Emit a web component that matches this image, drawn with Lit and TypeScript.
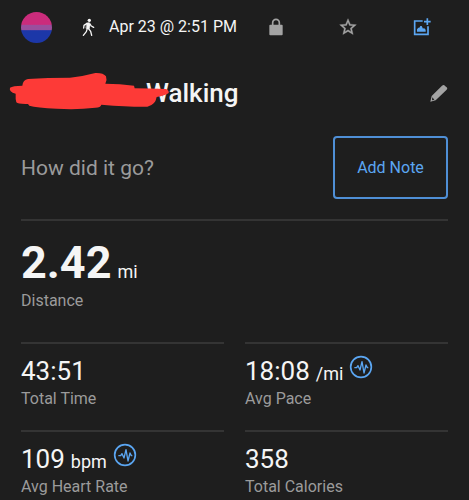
import { LitElement, html, css, svg, nothing } from "lit";
import { customElement, property } from "lit/decorators.js";

@customElement("metric-tile")
class MetricTile extends LitElement {
  @property() value = "";
  @property() unit = "";
  @property() label = "";
  @property({ type: Boolean }) chart = false;
  @property({ type: Boolean, reflect: true }) hero = false;

  static styles = css`
    :host {
      display: block;
      border-top: 2px solid #343434;
      height: 86px;
    }
    .reading {
      display: flex;
      align-items: baseline;
      gap: 6px;
      height: 32px;
      padding-top: 11px;
      line-height: 32px;
      color: #f5f5f5;
    }
    .value {
      font-size: 26px;
    }
    .unit {
      font-size: 18px;
      line-height: 20px;
    }
    .label {
      font-size: 16px;
      line-height: 20px;
      padding-top: 2px;
      color: #9b9b9b;
    }
    .chart {
      align-self: flex-start;
      width: 24px;
      height: 24px;
      padding: 0;
      border: 0;
      background: none;
      color: #5ba6f2;
      cursor: pointer;
    }
    .chart svg {
      display: block;
    }
    :host([hero]) {
      height: 121px;
    }
    :host([hero]) .reading {
      height: 52px;
      padding-top: 16px;
      line-height: 52px;
    }
    :host([hero]) .value {
      font-size: 45px;
      font-weight: 700;
    }
  `;

  render() {
    return html`
      <div class="reading">
        <span class="value">${this.value}</span>
        ${this.unit ? html`<span class="unit">${this.unit}</span>` : nothing}
        ${this.chart
          ? html`<button class="chart" aria-label="Show ${this.label} chart">
              <svg width="24" height="24" viewBox="0 0 72 72" fill="none" stroke="currentColor">
                <circle cx="36" cy="36" r="31" stroke-width="5" />
                <path d="M16 38h7l4-6 6 13 6-25 6 34 6-24 4 8h3" stroke-width="4" stroke-linejoin="round" />
              </svg>
            </button>`
          : nothing}
      </div>
      <div class="label">${this.label}</div>
    `;
  }
}

const walkIcon = svg`
  <svg width="15" height="19" viewBox="0 0 45 57" fill="none" stroke="currentColor" stroke-linecap="round" stroke-linejoin="round">
    <circle cx="25" cy="7" r="5" fill="currentColor" stroke="none" />
    <path d="M18 15l7-1 3 6-4 13-8-2z" fill="currentColor" stroke-width="2" />
    <path d="M18 16l-9 6-1 8M27 18l4 6 7 4M19 31l-3 10-9 11M22 31l7 9 3 12" stroke-width="4" />
  </svg>`;

const lockIcon = svg`
  <svg width="14" height="18" viewBox="0 0 42 54">
    <path d="M11 22v-8a10 10 0 0 1 20 0v8" fill="none" stroke="currentColor" stroke-width="5" />
    <rect x="1" y="20" width="40" height="32" rx="3" fill="currentColor" />
  </svg>`;

const starIcon = svg`
  <svg width="20" height="20" viewBox="0 0 24 24" fill="currentColor" stroke="currentColor" stroke-width="0.4">
    <path d="M22 9.24l-7.19-.62L12 2 9.19 8.63 2 9.24l5.46 4.73L5.82 21 12 17.27 18.18 21l-1.63-7.03L22 9.24zM12 15.4l-3.76 2.27 1-4.28-3.32-2.88 4.38-.38L12 6.1l1.71 4.04 4.38.38-3.32 2.88 1 4.28L12 15.4z" />
  </svg>`;

const imageIcon = svg`
  <svg width="18" height="18" viewBox="0 0 54 54">
    <path d="M29 9H5v40h40V25M43 1v20M33 11h20" fill="none" stroke="currentColor" stroke-width="5" />
    <path d="M12 41v-7l4-5h3l3-5h4l4 8 3-2 5 5v6z" fill="currentColor" />
  </svg>`;

const pencilIcon = svg`
  <svg width="18" height="18" viewBox="0 0 54 54">
    <path d="M1 53l4-17L36 5l4-2 3 1 3 3 4 3 2 3-2 4L17 49z" fill="currentColor" />
    <path d="M7 40l6 7-7 2z" fill="#1e1e1e" />
  </svg>`;

const scribble = svg`
  <svg class="scribble" width="164" height="40" viewBox="24 30 492 120">
    <path fill="#fd3a37" d="M30 80Q38 74 67 74Q69 56 84 54Q142 50 210 50Q250 46 286 36Q310 35 318 46Q322 56 316 68Q360 68 402 74L404 82Q450 82 498 84Q508 88 506 96Q496 104 470 108Q466 132 442 137Q390 138 304 131Q302 140 286 140Q230 147 170 143Q110 140 88 134L84 129Q54 130 49 124Q46 114 47 98Q26 92 30 80Z" />
  </svg>`;

@customElement("app-root")
class AppRoot extends LitElement {
  static styles = css`
    :host {
      display: block;
      box-sizing: border-box;
      min-height: 100vh;
      padding: 0 21px;
      background: #1e1e1e;
      color: #f5f5f5;
      font-family: Roboto, "Liberation Sans", sans-serif;
    }
    button {
      font: inherit;
      cursor: pointer;
    }
    svg {
      display: block;
    }
    .bar {
      display: flex;
      align-items: center;
      justify-content: space-between;
      height: 54px;
    }
    .who {
      display: flex;
      align-items: center;
    }
    .avatar {
      width: 31px;
      height: 31px;
      margin-right: 29px;
      border-radius: 50%;
      background: linear-gradient(#cb2c7c 0 40%, #9a4f9d 42% 58%, #1c37a8 60%);
    }
    time {
      margin-left: 13px;
      font-size: 16px;
      line-height: 20px;
    }
    .actions {
      display: flex;
      align-items: center;
      gap: 55px;
      padding-right: 17px;
    }
    .icon {
      display: block;
      padding: 0;
      border: 0;
      background: none;
      color: #a3a3a3;
    }
    .photo {
      color: #5ba6f2;
    }
    .title {
      display: flex;
      align-items: center;
      justify-content: space-between;
      height: 78px;
    }
    h1 {
      position: relative;
      margin: 0;
      padding-left: 125px;
      font-size: 26px;
      font-weight: 500;
      line-height: 32px;
    }
    .scribble {
      position: absolute;
      left: -13px;
      top: -6px;
    }
    .note {
      display: flex;
      align-items: center;
      justify-content: space-between;
      padding: 4px 0 20px;
    }
    .note p {
      margin: 0;
      font-size: 21px;
      line-height: 28px;
      color: #9b9b9b;
    }
    .add {
      width: 115px;
      height: 63px;
      padding: 0;
      border: 2px solid #4f8fd6;
      border-radius: 4px;
      background: none;
      color: #5ba6f2;
      font-size: 16px;
    }
    .grid {
      display: grid;
      grid-template-columns: 1fr 1fr;
      column-gap: 21px;
    }
  `;

  render() {
    return html`
      <header class="bar">
        <div class="who">
          <div class="avatar"></div>
          ${walkIcon}
          <time>Apr 23 @ 2:51 PM</time>
        </div>
        <div class="actions">
          <button class="icon" aria-label="Privacy">${lockIcon}</button>
          <button class="icon" aria-label="Favorite">${starIcon}</button>
          <button class="icon photo" aria-label="Add photo">${imageIcon}</button>
        </div>
      </header>
      <main>
        <div class="title">
          <h1>Walking${scribble}</h1>
          <button class="icon" aria-label="Edit name">${pencilIcon}</button>
        </div>
        <section class="note">
          <p>How did it go?</p>
          <button class="add">Add Note</button>
        </section>
        <metric-tile hero value="2.42" unit="mi" label="Distance"></metric-tile>
        <section class="grid">
          <metric-tile value="43:51" label="Total Time"></metric-tile>
          <metric-tile value="18:08" unit="/mi" label="Avg Pace" chart></metric-tile>
          <metric-tile value="109" unit="bpm" label="Avg Heart Rate" chart></metric-tile>
          <metric-tile value="358" label="Total Calories"></metric-tile>
        </section>
      </main>
    `;
  }
}
